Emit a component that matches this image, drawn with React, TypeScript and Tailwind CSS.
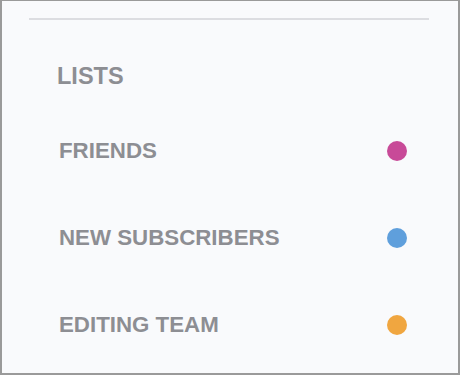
import React from 'react';

const lists = [
  { name: 'FRIENDS', color: 'bg-[#c84a98]' },
  { name: 'NEW SUBSCRIBERS', color: 'bg-[#5f9fdc]' },
  { name: 'EDITING TEAM', color: 'bg-[#f0a640]' },
];

export default function App() {
  return (
    <div
      className="w-[460px] h-[375px] bg-[#f9fafc] border-[#9a9a9a] border-t border-l-2 border-r-2 border-b-2 flex flex-col"
      style={{ fontFamily: '"Liberation Sans", Arial, sans-serif' }}
    >
      {/* divider */}
      <div className="mt-[17px] ml-[27px] w-[400px] h-[2px] bg-[#dcdde1]" />

      <div className="mt-[36px] h-[40px] flex items-center pl-[55px]">
        <span className="text-[23.5px] font-bold text-[#8d8e93] leading-[28px]">LISTS</span>
      </div>

      <div className="mt-[35px] flex flex-col gap-[47px]">
        {lists.map(l => (
          <div key={l.name} className="h-[40px] flex items-center justify-between pl-[57px] pr-[51px]">
            <span className="text-[22.3px] font-bold text-[#8d8e93] leading-[28px]">{l.name}</span>
            <span className={`w-[20px] h-[20px] rounded-full ${l.color}`} />
          </div>
        ))}
      </div>
    </div>
  );
}
